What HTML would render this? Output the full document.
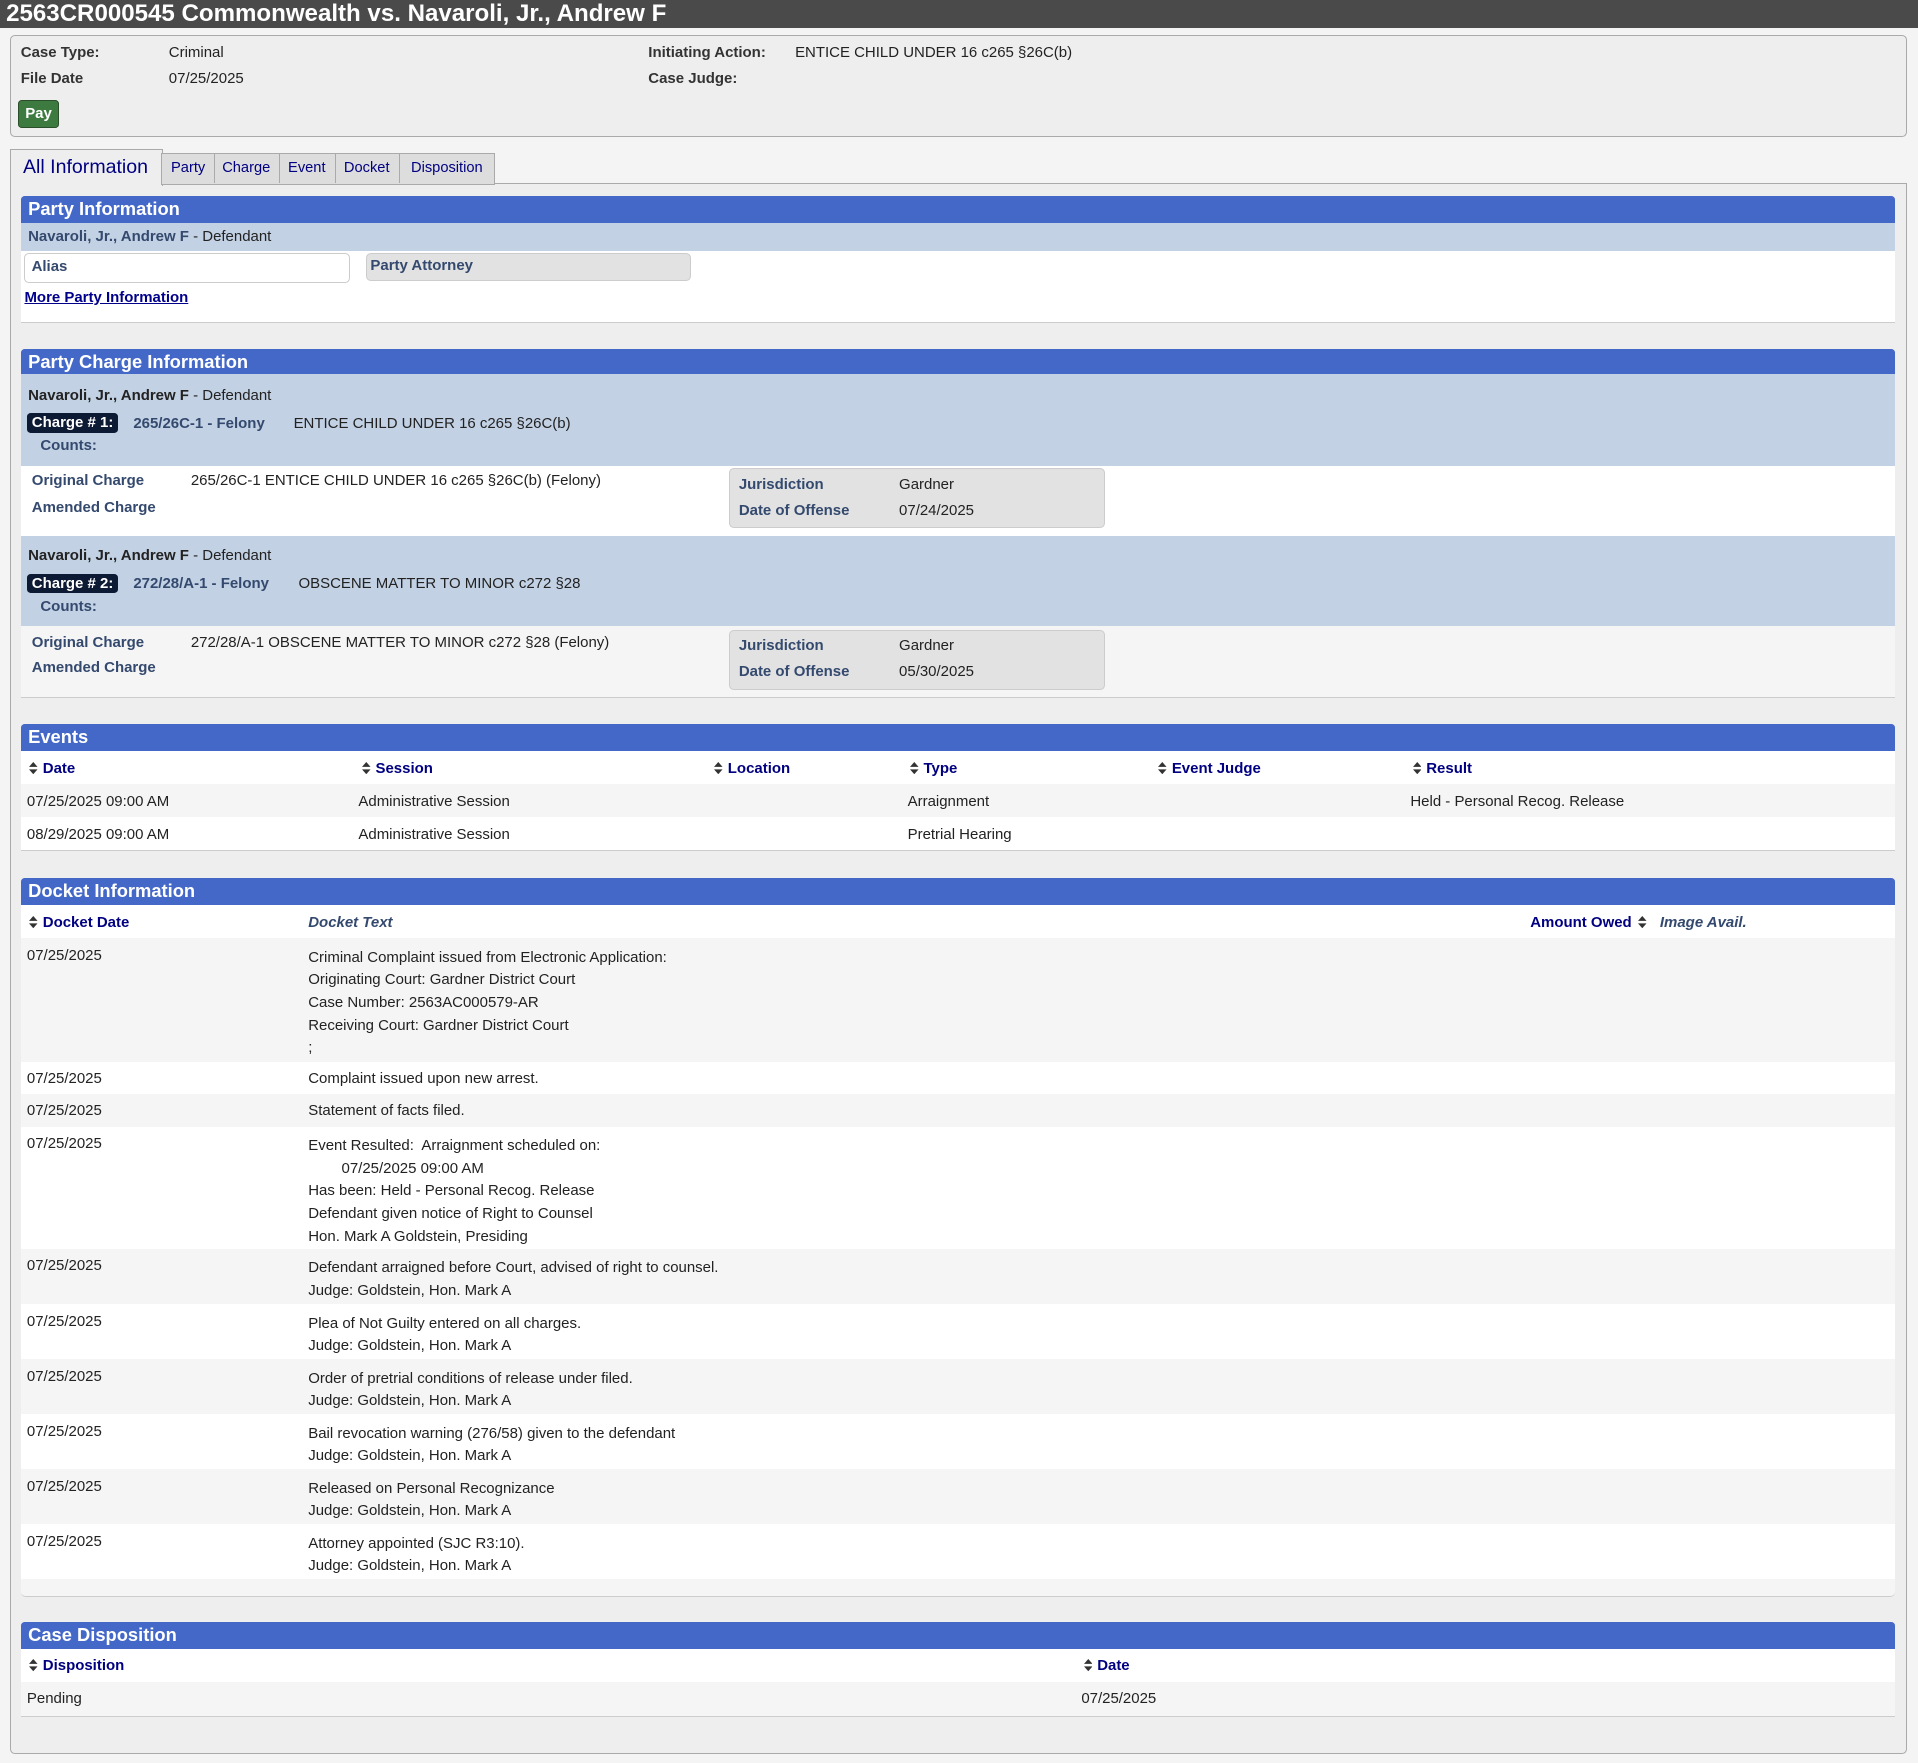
<!DOCTYPE html>
<html><head><meta charset="utf-8">
<style>
html{zoom:1.22321}
body{margin:0;width:1568px;height:1441px;background:#f4f4f4;font-family:"Liberation Sans",Arial,sans-serif;font-size:12.25px;color:#222;position:relative;overflow:hidden}
.a{position:absolute;white-space:nowrap}
.title{left:0;top:0;width:1568px;height:23px;background:#4a4a4a;color:#fff;font-weight:bold;font-size:19.7px;line-height:23px;padding-left:5px;box-sizing:border-box}
.lbl{font-weight:bold;color:#333}
.box{border:1px solid #aaa;border-radius:4px;box-sizing:border-box}
.hdr{position:absolute;left:17px;width:1532px;height:22px;background:#4468c8;color:#fff;font-weight:bold;font-size:15px;line-height:21px;padding-left:6px;box-sizing:border-box;border-radius:3px 3px 0 0}
.band{position:absolute;left:17px;width:1532px}
.nv{color:#000080;font-weight:bold}
.bl{color:#34496e;font-weight:bold}
.badge{background:#0d1a33;color:#fff;font-weight:bold;border-radius:3px;padding:1px 4px}
.srt{display:inline-block;width:7px;height:10px;margin-right:4px;vertical-align:-1px}
.th{border-bottom:1px solid #ccc;background:#fff}
</style></head><body>
<div class="a title">2563CR000545 Commonwealth vs. Navaroli, Jr., Andrew F</div>

<div class="a box" style="left:8px;top:29px;width:1551px;height:83px;background:#eee"></div>
<div class="a lbl" style="left:17px;top:36px">Case Type:</div>
<div class="a" style="left:138px;top:36px">Criminal</div>
<div class="a lbl" style="left:17px;top:57px">File Date</div>
<div class="a" style="left:138px;top:57px">07/25/2025</div>
<div class="a lbl" style="left:530px;top:36px">Initiating Action:</div>
<div class="a" style="left:650px;top:36px">ENTICE CHILD UNDER 16 c265 §26C(b)</div>
<div class="a lbl" style="left:530px;top:57px">Case Judge:</div>
<div class="a" style="left:15px;top:82px;width:33px;height:23px;background:#3d7a3f;border:1px solid #2a4f2a;border-radius:3px;box-sizing:border-box;color:#fff;font-weight:bold;text-align:center;line-height:21px">Pay</div>

<div class="a" style="left:8px;top:150px;width:1551px;height:1284px;background:#eee;border:1px solid #aaa;border-radius:0 0 4px 4px;box-sizing:border-box"></div>
<div class="a" style="left:8px;top:122px;width:125px;height:30px;background:#eee;border:1px solid #aaa;border-bottom:none;box-sizing:border-box;color:#000080;font-size:16px;line-height:28px;padding-left:10px">All Information</div>
<div class="a" style="left:132px;top:125px;width:273px;height:26px;background:#ddd;border:1px solid #aaa;box-sizing:border-box;font-size:12px;color:#000080;line-height:24px">
<span style="position:absolute;left:0;width:42px;text-align:center;border-right:1px solid #aaa;height:24px">Party</span>
<span style="position:absolute;left:42px;width:53px;text-align:center;border-right:1px solid #aaa;height:24px">Charge</span>
<span style="position:absolute;left:95px;width:46px;text-align:center;border-right:1px solid #aaa;height:24px">Event</span>
<span style="position:absolute;left:141px;width:52px;text-align:center;border-right:1px solid #aaa;height:24px">Docket</span>
<span style="position:absolute;left:193px;width:79px;text-align:center">Disposition</span>
</div>

<svg width="0" height="0" style="position:absolute"><defs><symbol id="s" viewBox="0 0 7 10"><path d="M3.5 0L7 4H0Z M3.5 10L7 6H0Z" fill="#333"/></symbol></defs></svg>

<div class="hdr" style="top:160px">Party Information</div>
<div class="band" style="top:182px;height:23px;background:#c2d1e4"></div>
<div class="a" style="left:23px;top:186px"><span class="bl">Navaroli, Jr., Andrew F</span> - Defendant</div>
<div class="band" style="top:205px;height:58px;background:#fff;border-bottom:1px solid #ccc"></div>
<div class="a" style="left:20px;top:207px;width:266px;height:24px;border:1px solid #ccc;border-radius:4px;box-sizing:border-box;background:#fff;padding-left:5px;line-height:22px" ><span class="bl">Alias</span></div>
<div class="a" style="left:299px;top:207px;width:266px;height:23px;border:1px solid #ccc;border-radius:4px;box-sizing:border-box;background:#e2e2e2;padding-left:3px;line-height:19px"><span class="bl">Party Attorney</span></div>
<div class="a" style="left:20px;top:236px;color:#00008b;font-weight:bold;text-decoration:underline">More Party Information</div>

<div class="hdr" style="top:285px">Party Charge Information</div>
<div class="band" style="top:306px;height:75px;background:#c2d1e4"></div>
<div class="a" style="left:23px;top:316px"><b>Navaroli, Jr., Andrew F</b> - Defendant</div>
<div class="a" style="left:22px;top:339px"><span class="badge">Charge # 1:</span></div>
<div class="a bl" style="left:109px;top:339px">265/26C-1 - Felony</div>
<div class="a" style="left:240px;top:339px">ENTICE CHILD UNDER 16 c265 §26C(b)</div>
<div class="a bl" style="left:33px;top:357px">Counts:</div>
<div class="band" style="top:381px;height:57px;background:#fff"></div>
<div class="a bl" style="left:26px;top:386px">Original Charge</div>
<div class="a" style="left:156px;top:386px">265/26C-1 ENTICE CHILD UNDER 16 c265 §26C(b) (Felony)</div>
<div class="a bl" style="left:26px;top:408px">Amended Charge</div>
<div class="a" style="left:596px;top:383px;width:307px;height:49px;background:#e2e2e2;border:1px solid #ccc;border-radius:4px;box-sizing:border-box"></div>
<div class="a bl" style="left:604px;top:389px">Jurisdiction</div><div class="a" style="left:735px;top:389px">Gardner</div>
<div class="a bl" style="left:604px;top:410px">Date of Offense</div><div class="a" style="left:735px;top:410px">07/24/2025</div>

<div class="band" style="top:438px;height:74px;background:#c2d1e4"></div>
<div class="a" style="left:23px;top:447px"><b>Navaroli, Jr., Andrew F</b> - Defendant</div>
<div class="a" style="left:22px;top:470px"><span class="badge">Charge # 2:</span></div>
<div class="a bl" style="left:109px;top:470px">272/28/A-1 - Felony</div>
<div class="a" style="left:244px;top:470px">OBSCENE MATTER TO MINOR c272 §28</div>
<div class="a bl" style="left:33px;top:489px">Counts:</div>
<div class="band" style="top:512px;height:58px;background:#f5f5f5;border-bottom:1px solid #ccc"></div>
<div class="a bl" style="left:26px;top:518px">Original Charge</div>
<div class="a" style="left:156px;top:518px">272/28/A-1 OBSCENE MATTER TO MINOR c272 §28 (Felony)</div>
<div class="a bl" style="left:26px;top:539px">Amended Charge</div>
<div class="a" style="left:596px;top:515px;width:307px;height:49px;background:#e2e2e2;border:1px solid #ccc;border-radius:4px;box-sizing:border-box"></div>
<div class="a bl" style="left:604px;top:521px">Jurisdiction</div><div class="a" style="left:735px;top:521px">Gardner</div>
<div class="a bl" style="left:604px;top:542px">Date of Offense</div><div class="a" style="left:735px;top:542px">05/30/2025</div>

<div class="hdr" style="top:592px">Events</div>
<div class="band th" style="top:614px;height:27px"></div>
<div class="a nv" style="left:24px;top:621px"><svg class="srt"><use href="#s"/></svg>Date</div>
<div class="a nv" style="left:296px;top:621px"><svg class="srt"><use href="#s"/></svg>Session</div>
<div class="a nv" style="left:584px;top:621px"><svg class="srt"><use href="#s"/></svg>Location</div>
<div class="a nv" style="left:744px;top:621px"><svg class="srt"><use href="#s"/></svg>Type</div>
<div class="a nv" style="left:947px;top:621px"><svg class="srt"><use href="#s"/></svg>Event Judge</div>
<div class="a nv" style="left:1155px;top:621px"><svg class="srt"><use href="#s"/></svg>Result</div>
<div class="band" style="top:641px;height:27px;background:#f5f5f5"></div>
<div class="band" style="top:668px;height:27px;background:#fff;border-bottom:1px solid #ccc"></div>
<div class="a" style="left:22px;top:648px">07/25/2025 09:00 AM</div>
<div class="a" style="left:293px;top:648px">Administrative Session</div>
<div class="a" style="left:742px;top:648px">Arraignment</div>
<div class="a" style="left:1153px;top:648px">Held - Personal Recog. Release</div>
<div class="a" style="left:22px;top:675px">08/29/2025 09:00 AM</div>
<div class="a" style="left:293px;top:675px">Administrative Session</div>
<div class="a" style="left:742px;top:675px">Pretrial Hearing</div>

<div class="hdr" style="top:718px">Docket Information</div>
<div class="band" style="top:740px;height:565px;background:#f5f5f5;border-bottom:1px solid #ccc;border-radius:0 0 4px 4px"></div>
<div class="band th" style="top:740px;height:27px"></div>
<div class="a nv" style="left:24px;top:747px"><svg class="srt"><use href="#s"/></svg>Docket Date</div>
<div class="a" style="left:252px;top:747px;color:#34496e;font-weight:bold;font-style:italic">Docket Text</div>
<div class="a nv" style="left:1251px;top:747px">Amount Owed <svg class="srt" style="margin-left:2px"><use href="#s"/></svg></div>
<div class="a" style="left:1357px;top:747px;color:#34496e;font-weight:bold;font-style:italic">Image Avail.</div>

<div class="band" style="top:767px;height:101px;background:#f5f5f5"></div>
<div class="band" style="top:868px;height:26px;background:#fff"></div>
<div class="band" style="top:894px;height:27px;background:#f5f5f5"></div>
<div class="band" style="top:921px;height:100px;background:#fff"></div>
<div class="band" style="top:1021px;height:45px;background:#f5f5f5"></div>
<div class="band" style="top:1066px;height:45px;background:#fff"></div>
<div class="band" style="top:1111px;height:45px;background:#f5f5f5"></div>
<div class="band" style="top:1156px;height:45px;background:#fff"></div>
<div class="band" style="top:1201px;height:45px;background:#f5f5f5"></div>
<div class="band" style="top:1246px;height:45px;background:#fff"></div>

<div class="a" style="left:22px;top:774px">07/25/2025</div>
<div class="a" style="left:252px;top:774px;line-height:18.5px">Criminal Complaint issued from Electronic Application:<br>Originating Court: Gardner District Court<br>Case Number: 2563AC000579-AR<br>Receiving Court: Gardner District Court<br>;</div>
<div class="a" style="left:22px;top:875px">07/25/2025</div><div class="a" style="left:252px;top:875px">Complaint issued upon new arrest.</div>
<div class="a" style="left:22px;top:901px">07/25/2025</div><div class="a" style="left:252px;top:901px">Statement of facts filed.</div>
<div class="a" style="left:22px;top:928px">07/25/2025</div>
<div class="a" style="left:252px;top:928px;line-height:18.5px">Event Resulted:&nbsp; Arraignment scheduled on:<br>&nbsp;&nbsp;&nbsp;&nbsp;&nbsp;&nbsp;&nbsp;&nbsp;07/25/2025 09:00 AM<br>Has been: Held - Personal Recog. Release<br>Defendant given notice of Right to Counsel<br>Hon. Mark A Goldstein, Presiding</div>
<div class="a" style="left:22px;top:1028px">07/25/2025</div><div class="a" style="left:252px;top:1028px;line-height:18.5px">Defendant arraigned before Court, advised of right to counsel.<br>Judge: Goldstein, Hon. Mark A</div>
<div class="a" style="left:22px;top:1073px">07/25/2025</div><div class="a" style="left:252px;top:1073px;line-height:18.5px">Plea of Not Guilty entered on all charges.<br>Judge: Goldstein, Hon. Mark A</div>
<div class="a" style="left:22px;top:1118px">07/25/2025</div><div class="a" style="left:252px;top:1118px;line-height:18.5px">Order of pretrial conditions of release under filed.<br>Judge: Goldstein, Hon. Mark A</div>
<div class="a" style="left:22px;top:1163px">07/25/2025</div><div class="a" style="left:252px;top:1163px;line-height:18.5px">Bail revocation warning (276/58) given to the defendant<br>Judge: Goldstein, Hon. Mark A</div>
<div class="a" style="left:22px;top:1208px">07/25/2025</div><div class="a" style="left:252px;top:1208px;line-height:18.5px">Released on Personal Recognizance<br>Judge: Goldstein, Hon. Mark A</div>
<div class="a" style="left:22px;top:1253px">07/25/2025</div><div class="a" style="left:252px;top:1253px;line-height:18.5px">Attorney appointed (SJC R3:10).<br>Judge: Goldstein, Hon. Mark A</div>

<div class="hdr" style="top:1326px">Case Disposition</div>
<div class="band th" style="top:1348px;height:27px"></div>
<div class="a nv" style="left:24px;top:1355px"><svg class="srt"><use href="#s"/></svg>Disposition</div>
<div class="a nv" style="left:886px;top:1355px"><svg class="srt"><use href="#s"/></svg>Date</div>
<div class="band" style="top:1375px;height:28px;background:#f5f5f5;border-bottom:1px solid #ccc"></div>
<div class="a" style="left:22px;top:1382px">Pending</div>
<div class="a" style="left:884px;top:1382px">07/25/2025</div>
</body></html>
